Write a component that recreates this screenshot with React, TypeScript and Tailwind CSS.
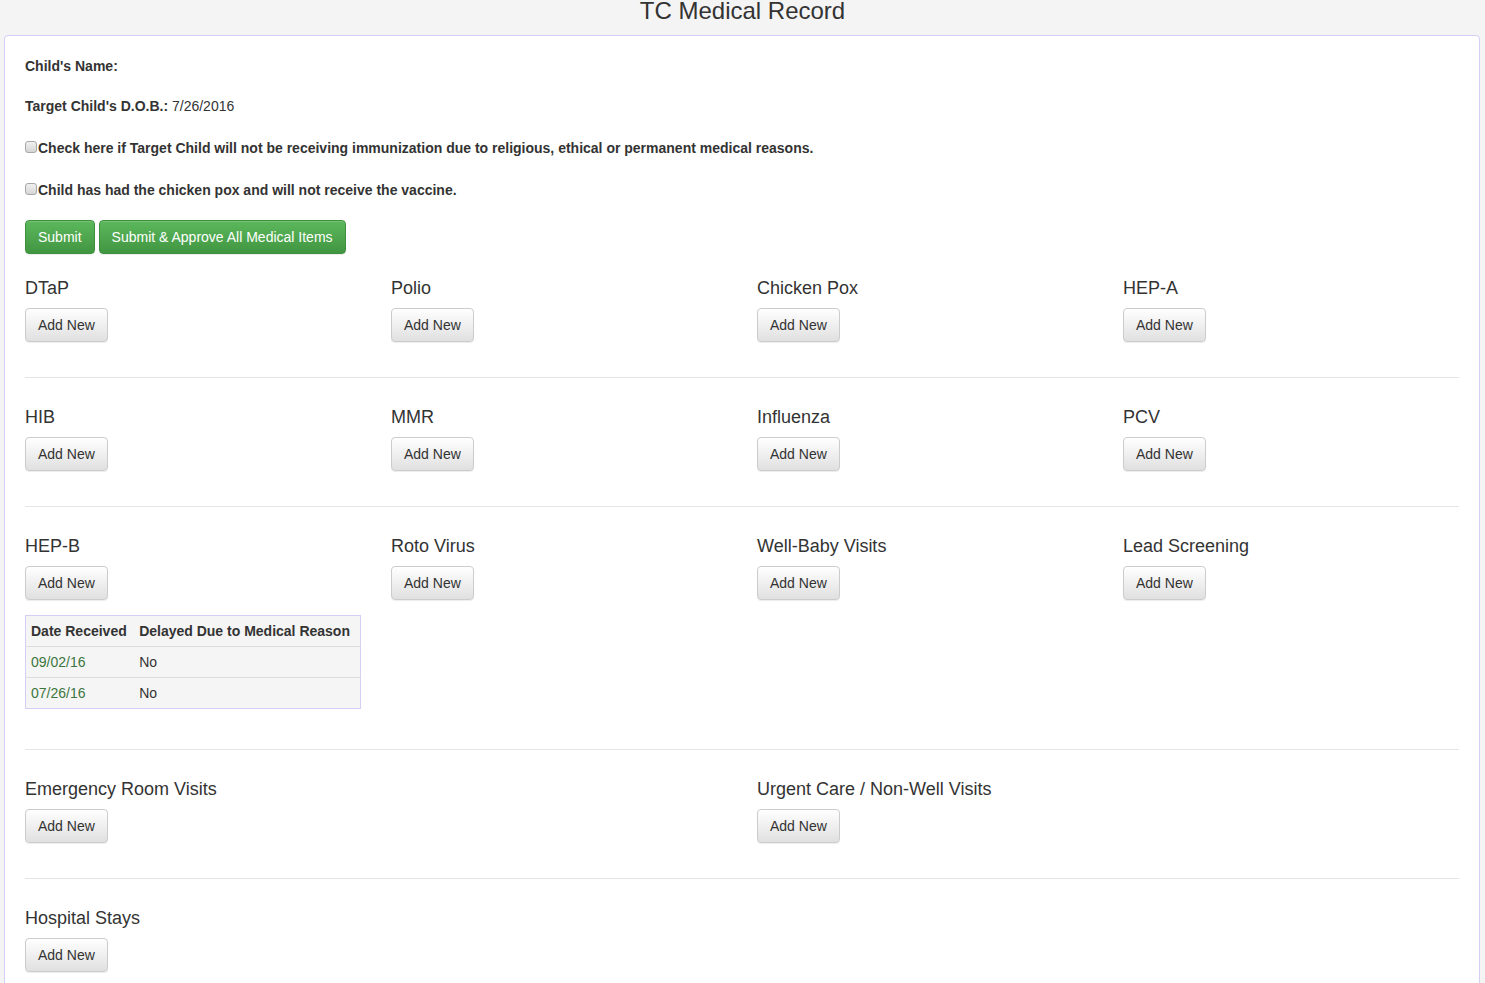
const rows: string[][] = [
  ["DTaP", "Polio", "Chicken Pox", "HEP-A"],
  ["HIB", "MMR", "Influenza", "PCV"],
];

const hepB = [
  { date: "09/02/16", delayed: "No" },
  { date: "07/26/16", delayed: "No" },
];

const AddNew = () => (
  <button className="h-[34px] px-[12px] rounded-[4px] border border-[#ccc] bg-gradient-to-b from-white to-[#e0e0e0] text-[14px] text-[#333] shadow-[inset_0_1px_0_rgba(255,255,255,0.15),0_1px_1px_rgba(0,0,0,0.075)]">
    Add New
  </button>
);

const Item = ({ title, children }: { title: string; children?: React.ReactNode }) => (
  <div className="flex flex-col items-start">
    <h4 className="mt-[10px] mb-[10px] text-[18px] leading-[20px] text-[#333]">{title}</h4>
    <AddNew />
    <div className="h-[15px]" />
    {children}
  </div>
);

const Checkbox = () => (
  <span className="mt-[3px] mr-[1px] w-[12px] h-[12px] shrink-0 rounded-[3px] border border-[#a8a8a8] bg-gradient-to-b from-[#f0f0f0] to-[#d6d6d6]" />
);

const Divider = () => <hr className="mt-[20px] mb-[19px] border-0 border-t border-[#e5e5e5]" />;

export default function App() {
  return (
    <div className="min-h-screen bg-[#f4f4f4] font-['Liberation_Sans',Arial,sans-serif] text-[14px] text-[#333]">
      <div className="-mt-[2px] mb-[11px] text-center text-[24px] leading-[26px]">TC Medical Record</div>

      <div className="ml-[4px] mr-[5px] rounded-[4px] border border-[#d3cff7] bg-white p-[20px]">
        <p className="mb-[20px] leading-[20px] font-bold">Child's Name:</p>
        <p className="mb-[20px] leading-[20px]">
          <span className="font-bold">Target Child's D.O.B.:</span> 7/26/2016
        </p>
        <div className="mb-[20px] flex h-[22px] items-start pt-[2px] leading-[20px] font-bold">
          <Checkbox />
          Check here if Target Child will not be receiving immunization due to religious, ethical or permanent medical
          reasons.
        </div>
        <div className="mb-[20px] flex h-[22px] items-start pt-[2px] leading-[20px] font-bold">
          <Checkbox />
          Child has had the chicken pox and will not receive the vaccine.
        </div>
        <div className="mb-[14px] flex gap-[4px]">
          <button className="h-[34px] px-[12px] rounded-[4px] border border-[#3e8f3e] bg-gradient-to-b from-[#5cb85c] to-[#419641] text-[14px] text-white shadow-[inset_0_1px_0_rgba(255,255,255,0.15),0_1px_1px_rgba(0,0,0,0.075)]">
            Submit
          </button>
          <button className="h-[34px] px-[12px] rounded-[4px] border border-[#3e8f3e] bg-gradient-to-b from-[#5cb85c] to-[#419641] text-[14px] text-white shadow-[inset_0_1px_0_rgba(255,255,255,0.15),0_1px_1px_rgba(0,0,0,0.075)]">
            Submit &amp; Approve All Medical Items
          </button>
        </div>

        {rows.map((row, i) => (
          <div key={i}>
            <div className="grid grid-cols-4 gap-x-[30px]">
              {row.map((t) => (
                <Item key={t} title={t} />
              ))}
            </div>
            <Divider />
          </div>
        ))}

        <div className="grid grid-cols-4 gap-x-[30px]">
          <Item title="HEP-B">
            <table className="mb-[20px] w-full border border-[#d3cff7] bg-[#f5f5f5] text-left leading-[20px]">
              <thead>
                <tr>
                  <th className="p-[5px] font-bold whitespace-nowrap">Date Received</th>
                  <th className="p-[5px] font-bold whitespace-nowrap">Delayed Due to Medical Reason</th>
                </tr>
              </thead>
              <tbody>
                {hepB.map((r) => (
                  <tr key={r.date} className="border-t border-[#ddd]">
                    <td className="p-[5px] text-[#3c763d]">{r.date}</td>
                    <td className="p-[5px]">{r.delayed}</td>
                  </tr>
                ))}
              </tbody>
            </table>
          </Item>
          <Item title="Roto Virus" />
          <Item title="Well-Baby Visits" />
          <Item title="Lead Screening" />
        </div>
        <Divider />

        <div className="grid grid-cols-2 gap-x-[30px]">
          <Item title="Emergency Room Visits" />
          <Item title="Urgent Care / Non-Well Visits" />
        </div>
        <Divider />

        <div className="grid grid-cols-2 gap-x-[30px]">
          <Item title="Hospital Stays" />
        </div>
      </div>
    </div>
  );
}
